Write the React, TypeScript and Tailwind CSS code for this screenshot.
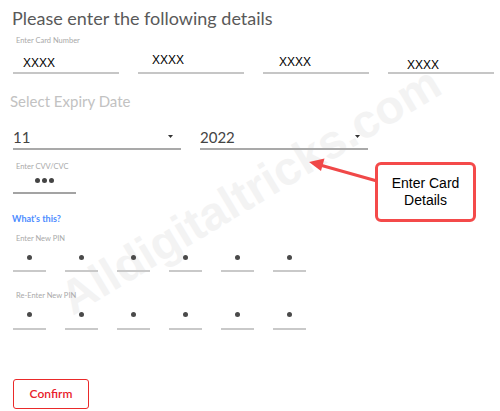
import React from "react";

const ui = { fontFamily: 'Lato, "Open Sans", sans-serif' };
const arial = { fontFamily: '"Liberation Sans", Arial, sans-serif' };

function PinRow({ gapClass }: { gapClass: string }) {
  return (
    <div className="flex gap-[19px]">
      {[0, 1, 2, 3, 4, 5].map((i) => (
        <div key={i} className="flex w-[33px] shrink-0 flex-col items-center">
          <div className="h-[5px] w-[5px] rounded-full bg-[#4a4a4a]" />
          <div className={`${gapClass} h-[2px] w-full bg-[#c9c9c9]`} />
        </div>
      ))}
    </div>
  );
}

function Arrow() {
  return (
    <svg width="5" height="3" viewBox="0 0 5 3" className="mr-[8px]">
      <path d="M0 0 L5 0 L2.5 3 Z" fill="#333" />
    </svg>
  );
}

export default function App() {
  const cards = [
    { pl: "pl-[10px]", pt: "pt-[11px]" },
    { pl: "pl-[14px]", pt: "pt-[8px]" },
    { pl: "pl-[16px]", pt: "pt-[10px]" },
    { pl: "pl-[19px]", pt: "pt-[13px]" },
  ];
  return (
    <div className="relative h-[411px] w-[500px] overflow-hidden bg-white" style={ui}>
      <div
        className="pointer-events-none absolute left-[250px] top-[190px] -translate-x-1/2 -translate-y-1/2 -rotate-[31deg] whitespace-nowrap text-[47px] font-bold leading-none text-[#f3f3f3]"
        style={arial}
      >
        Alldigitaltricks.com
      </div>

      <div className="relative flex flex-col pl-[13px]">
        <div className="-ml-px h-[30px] pt-[6px] text-[18px] leading-[24px] text-[#595959]">
          Please enter the following details
        </div>

        <div className="ml-[3px] mt-[6px] h-[9px] text-[7.5px] leading-[9px] text-[#a9a9a9]">
          Enter Card Number
        </div>

        <div className="flex gap-[19px]">
          {cards.map((c, i) => (
            <div key={i} className="flex w-[106px] shrink-0 flex-col">
              <div className={`h-[27px] ${c.pl} ${c.pt}`}>
                <div className="text-[12px] leading-[14px] text-black" style={arial}>
                  XXXX
                </div>
              </div>
              <div className="h-[2px] bg-[#c6c6c6]" />
            </div>
          ))}
        </div>

        <div className="-ml-[3px] mt-[17px] h-[20px] text-[15px] leading-[20px] text-[#c2c2c2]">
          Select Expiry Date
        </div>

        <div className="mt-[14px] flex gap-[19px]">
          {["11", "2022"].map((v) => (
            <div key={v} className="flex w-[168px] shrink-0 flex-col">
              <div className="flex h-[23px] items-center justify-between">
                <span className="text-[15px] leading-[20px] text-[#444]">{v}</span>
                <Arrow />
              </div>
              <div className="h-[2px] bg-[#a9a9a9]" />
            </div>
          ))}
        </div>

        <div className="ml-[3px] mt-[12px] h-[9px] text-[7.5px] leading-[9px] text-[#a9a9a9]">
          Enter CVV/CVC
        </div>
        <div className="ml-[22px] mt-[7px] flex h-[5px] gap-[2px]">
          <div className="h-[5px] w-[5px] rounded-full bg-[#444]" />
          <div className="h-[5px] w-[5px] rounded-full bg-[#444]" />
          <div className="h-[5px] w-[5px] rounded-full bg-[#444]" />
        </div>
        <div className="mt-[9px] h-[2px] w-[63px] bg-[#a3a3a3]" />

        <div className="-ml-px mt-[19px] h-[11px] text-[9px] font-bold leading-[11px] text-[#4d8cff]">
          What&apos;s this?
        </div>

        <div className="ml-[3px] mt-[10px] h-[9px] text-[7.5px] leading-[9px] text-[#a9a9a9]">
          Enter New PIN
        </div>
        <div className="mt-[12px]">
          <PinRow gapClass="mt-[10px]" />
        </div>

        <div className="ml-[3px] mt-[19px] h-[9px] text-[7.5px] leading-[9px] text-[#a9a9a9]">
          Re-Enter New PIN
        </div>
        <div className="mt-[12px]">
          <PinRow gapClass="mt-[11px]" />
        </div>

        <button className="mt-[49px] flex h-[30px] w-[76px] items-center justify-center rounded-[3px] border border-[#ea2a2a] bg-white text-[12px] font-semibold text-[#e8202a]">
          Confirm
        </button>
      </div>

      <svg className="pointer-events-none absolute left-0 top-0" width="500" height="411">
        <line x1="320" y1="165" x2="377" y2="181" stroke="#f04848" strokeWidth="3" />
        <polygon points="309,162 321,171 324.5,158.5" fill="#f04848" />
      </svg>

      <div
        className="absolute left-[375px] top-[162px] flex h-[60px] w-[101px] items-center justify-center rounded-[6px] border-[3px] border-[#f44a4a] bg-white text-center text-[14px] leading-[17px] text-black"
        style={arial}
      >
        Enter Card
        <br />
        Details
      </div>
    </div>
  );
}
